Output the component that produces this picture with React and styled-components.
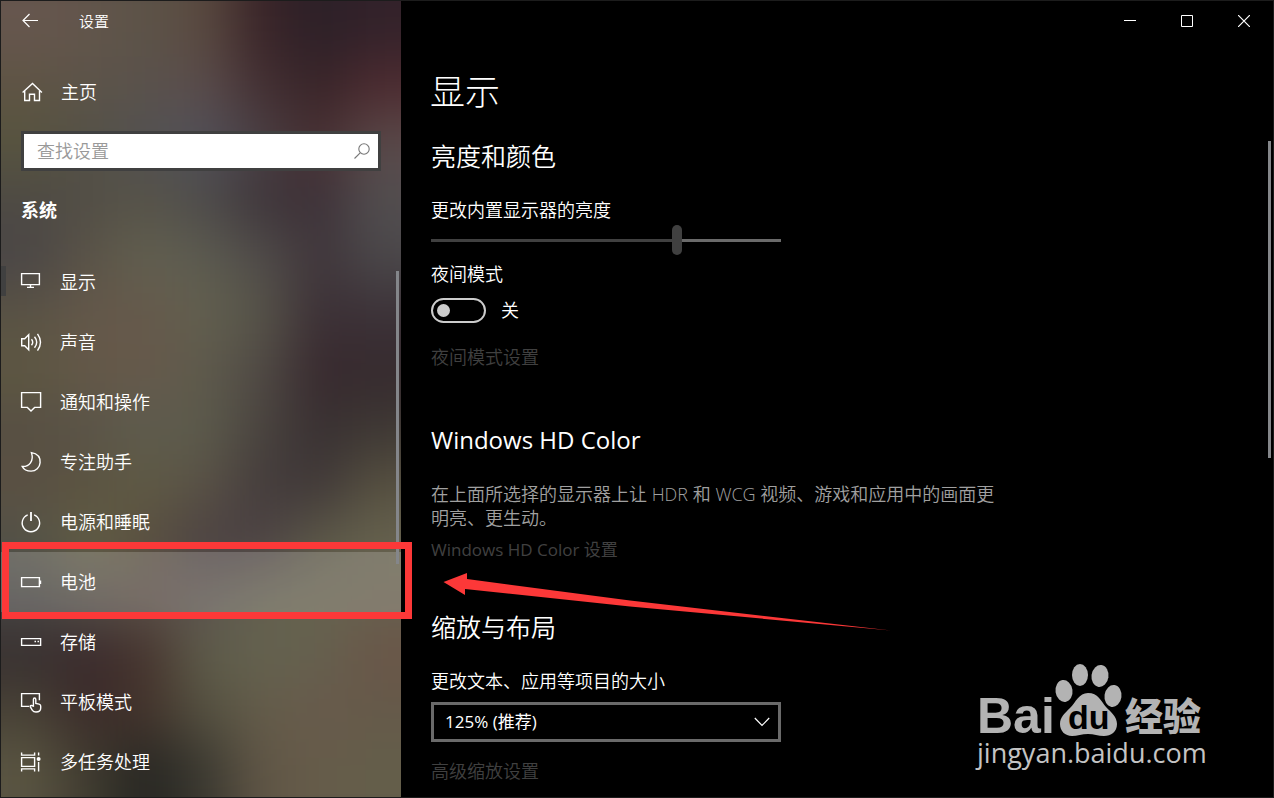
import styled, { createGlobalStyle } from 'styled-components';

const GlobalStyle = createGlobalStyle`
	* {
		box-sizing: border-box;
	}

	body {
		margin: 0;
		background: #000;
		color: #fff;
		font-family: 'Open Sans', 'Noto Sans CJK SC', sans-serif;
		font-size: 18px;
		font-weight: 350;
		line-height: 24px;
	}

	button,
	input,
	select {
		font: inherit;
		color: inherit;
	}

	h1,
	h2,
	p {
		margin: 0;
	}
`;

// colours of the wallpaper behind the acrylic pane, blurred into each other
const WALLPAPER = [
	'66564e 62554b 5c5348 5a4a40 3a2428 2c2028 33222a',
	'5e5444 5c5449 5a524c 5a4c4c 443033 382428 4e2b30',
	'57543f 545046 525252 50505a 4a4044 482f32 5a4a4a',
	'4e4a44 524e46 575348 4e4c4b 3e353a 3d3138 524e50',
	'4a4646 5a5347 626050 5c5b50 504c4a 40363b 4b484a',
	'5a5345 64584a 66594b 62604f 575449 3c3036 3c3238',
	'5d5742 645848 66594b 5e5a4c 504a45 38292e 362a2e',
	'574f43 5a5448 5e5c4e 5c5b4c 4a443f 383032 3e3834',
	'5a5042 5b5341 5f5a44 5a5246 443c3c 403838 565040',
	'545348 625e44 5a5040 4c4242 4c4244 5c5848 66624e',
	'484644 544f48 5c5048 5c5450 64604f 67634f 67604f',
	'383030 3a2a2c 46342e 5e5c4a 64624f 65604e 6a5648',
	'484236 3c2c2a 44342c 545040 645c4a 685a4b 655a4a',
	'5a5542 403c30 262622 3a3830 605646 665c4a 645e4a',
].map((row) => row.split(' '));

const Window = styled.div`
	position: relative;
	display: flex;
	min-height: 100vh;
	border: 1px solid #1c1c1c;
	overflow: hidden;
`;

const Sidebar = styled.aside`
	position: relative;
	z-index: 1;
	flex: 0 0 400px;
	background: #544c44;
`;

const Backdrop = styled.svg`
	position: absolute;
	z-index: -1;
	inset: 0;
	width: 100%;
	height: 100%;
`;

const SidebarTitle = styled.header`
	display: flex;
	align-items: center;
	gap: 40px;
	height: 40px;
	padding-left: 21px;
	font-size: 15px;
`;

const IconButton = styled.button`
	display: flex;
	align-items: center;
	justify-content: center;
	width: ${({ $width = 57 }) => $width}px;
	height: 40px;
	padding: 0 1px 0 0;
	border: 0;
	background: none;
`;

const HomeLink = styled.a`
	display: flex;
	align-items: center;
	gap: 18px;
	height: 40px;
	margin-top: 31px;
	padding-left: 20px;
	color: inherit;
	text-decoration: none;
`;

const SearchBox = styled.label`
	display: flex;
	align-items: center;
	height: 40px;
	margin: 19px 20px 0;
	padding: 0 7px 0 13px;
	border: 3px solid #404040;
	background: #fff;
	color: #777;
`;

const SearchInput = styled.input`
	flex: 1;
	min-width: 0;
	padding: 0;
	border: 0;
	outline: 0;
	background: none;

	&::placeholder {
		color: #999;
		opacity: 1;
	}
`;

const SectionName = styled.h2`
	margin: 27px 20px 30px;
	font-size: 18px;
	font-weight: 700;
	line-height: 24px;
`;

const Nav = styled.nav`
	position: relative;
`;

const NavItem = styled.a`
	position: relative;
	display: flex;
	align-items: center;
	gap: 18px;
	height: 60px;
	padding-left: 19px;
	background: ${({ $hovered }) =>
		$hovered ? 'rgba(255, 255, 255, 0.18)' : 'none'};
	color: inherit;
	text-decoration: none;

	&::before {
		content: '';
		position: absolute;
		left: 0;
		top: 14px;
		width: 5px;
		height: 30px;
		background: ${({ $current }) => ($current ? '#404040' : 'none')};
	}
`;

const Frame = styled.span`
	position: absolute;
	z-index: 2;
	inset: -10px -11px -7px 1px;
	border: 7px solid #fc3838;
`;

const ScrollThumb = styled.span`
	position: absolute;
	z-index: 1;
	top: ${({ $top }) => $top}px;
	right: 2px;
	width: 3px;
	height: ${({ $height }) => $height}px;
	background: #84868a;
`;

const Main = styled.main`
	position: relative;
	flex: 1;
	min-width: 0;
	background: #000;
`;

const Caption = styled.div`
	display: flex;
	justify-content: flex-end;
	height: 40px;
`;

const Content = styled.div`
	padding: 27px 29px 0;
`;

const Title = styled.h1`
	font-size: 35px;
	font-weight: 300;
	line-height: 48px;
`;

const Section = styled.section`
	display: flex;
	flex-direction: column;
	align-items: flex-start;
	margin-top: ${({ $top }) => $top}px;
	padding-left: 1px;
`;

const SectionTitle = styled.h2`
	margin-bottom: 25px;
	font-size: ${({ $latin }) => ($latin ? 24 : 25)}px;
	font-weight: ${({ $latin }) => ($latin ? 400 : 350)};
	line-height: 34px;
`;

const Slider = styled.input`
	appearance: none;
	width: 350px;
	height: 30px;
	margin: 3px 0 7px;
	background: linear-gradient(
			to right,
			#404040 ${({ value }) => value}%,
			#6a6a6a 0
		)
		center / 100% 3px no-repeat;

	&::-webkit-slider-thumb {
		appearance: none;
		width: 10px;
		height: 30px;
		border-radius: 5px;
		background: #404040;
	}
`;

const ToggleRow = styled.label`
	display: flex;
	align-items: center;
	gap: 15px;
	height: 26px;
	margin: 11px 0 22px;
`;

const Toggle = styled.input`
	appearance: none;
	display: flex;
	align-items: center;
	width: 55px;
	height: 25px;
	margin: 0;
	padding-left: 4px;
	border: 2px solid #ccc;
	border-radius: 13px;

	&::before {
		content: '';
		width: 13px;
		height: 13px;
		border-radius: 50%;
		background: #ccc;
	}
`;

const Hint = styled.p`
	max-width: 570px;
	margin-bottom: 8px;
	color: #a0a0a0;
`;

const SettingLink = styled.a`
	color: #404040;
	font-size: ${({ $latin }) => ($latin ? 17 : 18)}px;
	font-weight: ${({ $latin }) => ($latin ? 400 : 350)};
	text-decoration: none;
`;

const SelectBox = styled.div`
	display: grid;
	align-items: center;
	width: 350px;
	margin: 9px 0 17px;

	& > * {
		grid-area: 1 / 1;
	}

	& > svg {
		justify-self: end;
		margin-right: 11px;
		pointer-events: none;
	}
`;

const Select = styled.select`
	appearance: none;
	width: 100%;
	height: 40px;
	padding: 0 11px;
	border: 3px solid #6a6a6a;
	border-radius: 0;
	background: #000;
	font-size: 17px;
	font-weight: 400;
`;

const Arrow = styled.svg`
	position: absolute;
	z-index: 2;
	top: 571px;
	left: 441px;
	pointer-events: none;
`;

const Watermark = styled.svg`
	position: absolute;
	right: 64px;
	bottom: 16px;
`;

const Icon = ({ children, size = 22 }) => (
	<svg
		width={size}
		height={size}
		viewBox={`0 0 ${size} ${size}`}
		fill="none"
		stroke="currentColor"
		strokeWidth="1.4"
		aria-hidden="true"
	>
		{children}
	</svg>
);

const ICONS = {
	display: <path d="M1.6 2.6h17.8v11H1.6zM10.500 13.600v2.600M7 16.400h7" />,
	sound: (
		<>
			<path d="M1.700 7.700h3l4-4v15l-4-4h-3z" />
			<path d="M11.500 8.200q2.400 3 0 6M14.500 5.700q4.400 5.500 0 11M17.500 2.800q6 8.400 0 16.800" />
		</>
	),
	notifications: <path d="M1.600 1.600h19v14.800h-6L11 20l-3.600-3.600H1.600z" />,
	focus: (
		<path d="M11.400 1.600c6 1 9 5 8.700 10-.3 5-4.300 8.500-9 8.500-4.200 0-7.500-1.800-8.900-4.600 7 .4 12-5.400 9.200-13.900z" />
	),
	power: (
		<>
			<path d="M7.700 3.900a8.700 8.700 0 1 0 6.400 0" />
			<path d="M11 1v9" strokeWidth="1.800" />
		</>
	),
	battery: (
		<>
			<path d="M1.600 6.600h17.800v9H1.600z" />
			<path d="M20.500 9.500v3.500" />
		</>
	),
	storage: (
		<>
			<path d="M1.600 7.600h19v6.800h-19z" />
			<path d="M14.500 10.500H16M17.500 10.500H19" />
		</>
	),
	tablet: (
		<>
			<path d="M9 15.400H1.600V2.600h17.800v6.600" />
			<path d="M13.400 15V8.500q0-1.500 1.200-1.500t1.200 1.500v4l3.300.6q1.600.4 1.600 2V17q0 4-4.700 4-2.500 0-3.600-1.600l-2.200-3.700q-.3-1.500 1.200-1.200z" />
		</>
	),
	multitask: (
		<>
			<path d="M1.600 6.600h13v8.800h-13zM1.600 1.500v2.600h13V1.500M1.600 20.500v-2.600h13v2.600M18.600 1.500v3M18.600 11v9.500" />
			<circle cx="18.600" cy="8" r="2" fill="currentColor" stroke="none" />
		</>
	),
};

const NAV_ITEMS = [
	{ id: 'display', label: '显示' },
	{ id: 'sound', label: '声音' },
	{ id: 'notifications', label: '通知和操作' },
	{ id: 'focus', label: '专注助手' },
	{ id: 'power', label: '电源和睡眠' },
	{ id: 'battery', label: '电池' },
	{ id: 'storage', label: '存储' },
	{ id: 'tablet', label: '平板模式' },
	{ id: 'multitask', label: '多任务处理' },
];

const clamp = (value, max) => Math.max(0, Math.min(max, value));

const Wallpaper = () => {
	const cells = [];

	// one extra ring of cells keeps the blur even at the edges
	for (let row = -1; row <= 14; row++) {
		for (let col = -1; col <= 7; col++) {
			cells.push(
				<rect
					key={`${row}:${col}`}
					x={col * 60}
					y={row * 57}
					width="61"
					height="58"
					fill={`#${WALLPAPER[clamp(row, 13)][clamp(col, 6)]}`}
				/>,
			);
		}
	}

	return (
		<Backdrop viewBox="0 0 415 798" preserveAspectRatio="none">
			<filter
				id="acrylic"
				x="-10%"
				y="-10%"
				width="120%"
				height="120%"
				colorInterpolationFilters="sRGB"
			>
				<feGaussianBlur stdDeviation="27" />
			</filter>
			<g filter="url(#acrylic)">{cells}</g>
		</Backdrop>
	);
};

const BaiduMark = () => (
	<Watermark width="236" height="118" viewBox="0 0 236 118" fill="#b3b3b3">
		<text
			x="4"
			y="70"
			fontFamily="Liberation Sans"
			fontSize="50"
			fontWeight="700"
		>
			Bai
		</text>
		<ellipse cx="91" cy="28" rx="8.500" ry="11" transform="rotate(-8 91 28)" />
		<ellipse cx="107" cy="12" rx="8" ry="11" />
		<ellipse cx="127" cy="13" rx="8.500" ry="11" transform="rotate(8 127 13)" />
		<ellipse cx="140" cy="33" rx="8.500" ry="11" transform="rotate(8 140 33)" />
		<path d="M115 30c10 0 13 8 18 14 5 5 11 10 11 17 0 8-6 12-13 12-6 0-10-2-16-2s-11 2-16 2c-7 0-12-5-12-12s5-11 10-16c6-6 9-15 18-15z" />
		<text
			x="95"
			y="66"
			fill="#000"
			fontFamily="Liberation Sans"
			fontSize="34"
			fontWeight="700"
		>
			du
		</text>
		<text
			x="152"
			y="67"
			fontFamily="Noto Sans CJK SC"
			fontSize="38"
			fontWeight="900"
		>
			经验
		</text>
		<text
			x="4"
			y="100"
			fill="#c4c4c4"
			fontFamily="Open Sans"
			fontSize="27"
			fontWeight="500"
		>
			jingyan.baidu.com
		</text>
	</Watermark>
);

const App = () => (
	<Window>
		<GlobalStyle />
		<Sidebar>
			<Wallpaper />
			<SidebarTitle>
				<IconButton $width={17} aria-label="返回">
					<Icon size={16}>
						<path d="M.8 7.500H16M7.500 1L1 7.500 7.500 14" strokeWidth="1.200" />
					</Icon>
				</IconButton>
				设置
			</SidebarTitle>
			<HomeLink href="#home">
				<Icon>
					<path d="M1.600 11.500L11.500 2.500l9.400 9M3.700 10v9.500h4.800v-6.300h5v6.300h5V10" />
				</Icon>
				主页
			</HomeLink>
			<SearchBox>
				<SearchInput type="text" placeholder="查找设置" aria-label="查找设置" />
				<Icon size={18}>
					<circle cx="11" cy="7" r="5.200" strokeWidth="1.100" />
					<path d="M7.200 10.800L1.500 16.500" strokeWidth="1.100" />
				</Icon>
			</SearchBox>
			<SectionName>系统</SectionName>
			<Nav>
				{NAV_ITEMS.map(({ id, label }) => (
					<NavItem
						key={id}
						href={`#${id}`}
						$current={id === 'display'}
						$hovered={id === 'battery'}
					>
						<Icon>{ICONS[id]}</Icon>
						{label}
						{id === 'battery' && <Frame />}
					</NavItem>
				))}
				<ScrollThumb $top={19} $height={293} />
			</Nav>
		</Sidebar>
		<Main>
			<Caption>
				<IconButton aria-label="最小化">
					<Icon size={12}>
						<path d="M0 5.500h12" strokeWidth="1" />
					</Icon>
				</IconButton>
				<IconButton aria-label="最大化">
					<Icon size={12}>
						<path d="M.5.5h11v11H.5z" strokeWidth="1" />
					</Icon>
				</IconButton>
				<IconButton aria-label="关闭">
					<Icon size={12}>
						<path d="M0 0l12 12M12 0L0 12" strokeWidth="1.200" />
					</Icon>
				</IconButton>
			</Caption>
			<Content>
				<Title>显示</Title>
				<Section $top={23}>
					<SectionTitle>亮度和颜色</SectionTitle>
					<label htmlFor="brightness">更改内置显示器的亮度</label>
					<Slider
						id="brightness"
						type="range"
						min="0"
						max="100"
						value={71}
						readOnly
					/>
					<label htmlFor="night-mode">夜间模式</label>
					<ToggleRow>
						<Toggle id="night-mode" type="checkbox" role="switch" />关
					</ToggleRow>
					<SettingLink href="#night">夜间模式设置</SettingLink>
				</Section>
				<Section $top={54}>
					<SectionTitle $latin>Windows HD Color</SectionTitle>
					<Hint>
						在上面所选择的显示器上让 HDR 和 WCG
						视频、游戏和应用中的画面更明亮、更生动。
					</Hint>
					<SettingLink href="#hd-color" $latin>
						Windows HD Color 设置
					</SettingLink>
				</Section>
				<Section $top={48}>
					<SectionTitle>缩放与布局</SectionTitle>
					<label htmlFor="scale">更改文本、应用等项目的大小</label>
					<SelectBox>
						<Select id="scale">
							<option>125% (推荐)</option>
						</Select>
						<Icon size={16}>
							<path d="M.8 4l7.200 7.500L15.200 4" strokeWidth="1.200" />
						</Icon>
					</SelectBox>
					<SettingLink href="#advanced-scale">高级缩放设置</SettingLink>
				</Section>
			</Content>
			<ScrollThumb $top={140} $height={317} />
			<BaiduMark />
		</Main>
		<Arrow width="450" height="62" viewBox="0 0 450 62" fill="#fc3838">
			<path d="M1.500 10L25 1v6l163 21.500 261 30-261-24L23 17v6z" />
		</Arrow>
	</Window>
);

export default App;
